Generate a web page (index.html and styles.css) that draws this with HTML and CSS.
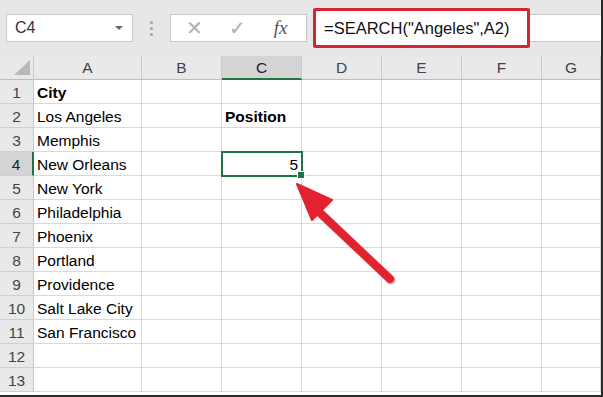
FILE: index.html
```html
<!DOCTYPE html>
<html lang="en">
<head>
    <meta charset="UTF-8">
    <title>SEARCH function</title>
    <link rel="stylesheet" href="styles.css">
</head>
<body>
    <div class="window">
        <!-- Formula toolbar -->
        <div class="toolbar">
            <div class="name-box">
                <span>C4</span>
                <span class="caret"></span>
            </div>
            <div class="grip"><i></i><i></i><i></i></div>
            <div class="buttons">
                <span class="btn cancel">&#x2715;</span>
                <span class="btn enter">&#x2713;</span>
                <span class="btn fx">fx</span>
            </div>
            <div class="formula">
                <div class="formula-mark">=SEARCH("Angeles",A2)</div>
            </div>
        </div>

        <!-- Sheet -->
        <div class="sheet" id="sheet"></div>

        <!-- Callout arrow -->
        <svg class="arrow" viewBox="0 0 603 397" width="603" height="397">
            <line x1="317" y1="210" x2="390" y2="279" stroke="#9c1820" stroke-width="9" stroke-linecap="round" opacity="0.35" transform="translate(1,1)"/>
            <line x1="317" y1="210" x2="390" y2="279" stroke="#e2222f" stroke-width="8" stroke-linecap="round"/>
            <polygon points="297,184 332,200 312,220" fill="#e2222f" stroke="#e2222f" stroke-width="2" stroke-linejoin="round"/>
        </svg>
    </div>

    <script>
        const cols = ['', 'A', 'B', 'C', 'D', 'E', 'F', 'G'];
        const data = {
            A1: 'City', A2: 'Los Angeles', A3: 'Memphis', A4: 'New Orleans',
            A5: 'New York', A6: 'Philadelphia', A7: 'Phoenix', A8: 'Portland',
            A9: 'Providence', A10: 'Salt Lake City', A11: 'San Francisco',
            C2: 'Position', C4: '5'
        };
        const bold = ['A1', 'C2'];
        const sheet = document.getElementById('sheet');

        function cell(cls, text) {
            const el = document.createElement('div');
            el.className = cls;
            el.textContent = text || '';
            sheet.appendChild(el);
            return el;
        }

        // header row
        cols.forEach((c, i) => {
            if (i === 0) {
                cell('corner').innerHTML = '<span class="tri"></span>';
            } else {
                cell('col-head' + (c === 'C' ? ' active' : ''), c);
            }
        });

        // body rows
        for (let r = 1; r <= 13; r++) {
            cell('row-head' + (r === 4 ? ' active' : ''), r);
            cols.slice(1).forEach(c => {
                const ref = c + r;
                let cls = 'cell';
                if (bold.includes(ref)) cls += ' bold';
                if (ref === 'C4') cls += ' selected num';
                cell(cls, data[ref]);
            });
        }
    </script>
</body>
</html>
```

FILE: styles.css
```css
* {
    margin: 0;
    padding: 0;
    box-sizing: border-box;
}

body {
    font-family: "Liberation Sans", Arial, sans-serif;
    background: #fff;
    color: #000;
}

.window {
    position: relative;
    width: 603px;
    height: 397px;
    overflow: hidden;
    border-right: 2px solid #2a2a2a;
    border-bottom: 2px solid #2a2a2a;
    background: #fff;
}

/* Toolbar */
.toolbar {
    height: 56px;
    background: #e7e7e7;
    display: flex;
    align-items: center;
    padding-left: 6px;
}

.name-box {
    width: 127px;
    height: 28px;
    background: #fff;
    border: 1px solid #c8c8c8;
    display: flex;
    align-items: center;
    justify-content: space-between;
    padding: 0 9px 0 8px;
    font-size: 16px;
    color: #333;
}

.caret {
    width: 0;
    height: 0;
    border-left: 4px solid transparent;
    border-right: 4px solid transparent;
    border-top: 4px solid #666;
}

.grip {
    width: 37px;
    display: flex;
    flex-direction: column;
    align-items: center;
    gap: 3px;
}

.grip i {
    width: 3px;
    height: 3px;
    background: #a0a0a0;
    border-radius: 50%;
}

.buttons {
    width: 137px;
    height: 28px;
    background: #fff;
    border: 1px solid #c8c8c8;
    display: flex;
    align-items: center;
    justify-content: space-around;
    padding: 0 4px 0 2px;
}

.btn {
    font-size: 20px;
    color: #b0b0b0;
    width: 24px;
    text-align: center;
}

.btn.fx {
    font-family: "Liberation Serif", serif;
    font-style: italic;
    font-size: 19px;
    color: #555;
}

.formula {
    position: relative;
    flex: 1;
    height: 28px;
    margin-left: 6px;
    background: #fff;
    border: 1px solid #c8c8c8;
    border-right: none;
}

.formula-mark {
    position: absolute;
    left: -1px;
    top: -7px;
    width: 217px;
    height: 40px;
    border: 3px solid #d42632;
    border-radius: 2px;
    background: #fff;
    padding-left: 8px;
    display: flex;
    align-items: center;
    font-size: 16.5px;
    color: #111;
}

/* Sheet */
.sheet {
    display: grid;
    grid-template-columns: 34px 108px 80px 80px 80px 80px 80px 1fr;
    grid-auto-rows: 24px;
    font-size: 15.5px;
}

.corner,
.col-head,
.row-head {
    background: #e9e9e9;
    color: #444;
    border-right: 1px solid #c9c9c9;
    border-bottom: 1px solid #bdbdbd;
    display: flex;
    align-items: center;
    justify-content: center;
}

.col-head {
    padding-top: 1px;
}

.corner {
    justify-content: flex-end;
    align-items: flex-end;
    padding: 0 3px 4px 0;
}

.tri {
    width: 16px;
    height: 15px;
    background: #b8b8b8;
    clip-path: polygon(100% 0, 100% 100%, 0 100%);
}

.col-head.active {
    background: #d4d4d4;
    color: #222;
    border-bottom: 2px solid #217346;
}

.row-head {
    border-bottom-color: #cfcfcf;
    padding-top: 2px;
}

.row-head.active {
    background: #d4d4d4;
    color: #222;
    border-right: 2px solid #217346;
}

.cell {
    border-right: 1px solid #d9d9d9;
    border-bottom: 1px solid #d9d9d9;
    padding: 2px 3px 0;
    display: flex;
    align-items: center;
    white-space: nowrap;
}

.bold {
    font-weight: bold;
}

.num {
    justify-content: flex-end;
}

.selected {
    position: relative;
    outline: 2px solid #217346;
    outline-offset: -1px;
}

.selected::after {
    content: "";
    position: absolute;
    right: -4px;
    bottom: -4px;
    width: 6px;
    height: 6px;
    background: #217346;
    border: 1px solid #fff;
}

/* Callout */
.arrow {
    position: absolute;
    left: 0;
    top: 0;
    pointer-events: none;
}
```
